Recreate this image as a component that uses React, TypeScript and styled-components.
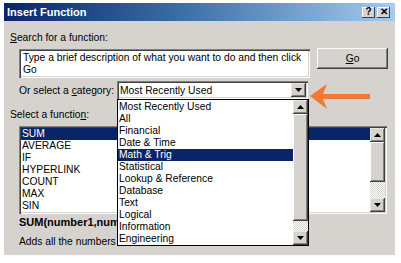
import styled, { createGlobalStyle } from "styled-components";

const GlobalStyle = createGlobalStyle`
    html, body {
        margin: 0;
        padding: 0;
        background: #ffffff;
    }
    body {
        font-family: "Liberation Sans", Arial, sans-serif;
        font-size: 10.3px;
        color: #000;
    }
`;

const Page = styled.div`
    padding: 3px 0 0 4px;
`;

const Dialog = styled.div`
    position: relative;
    width: 391px;
    height: 252px;
    background: #d6d3ce;
    box-sizing: border-box;
`;

const TitleBar = styled.div`
    height: 18px;
    display: flex;
    align-items: center;
    padding: 0 5px 0 3px;
    background: linear-gradient(to right, #0a246a 0%, #3a6ea5 45%, #a6caf0 100%);
`;

const Title = styled.div`
    flex: 1;
    color: #fff;
    font-weight: bold;
    font-size: 11px;
`;

const TitleButton = styled.div`
    width: 13px;
    height: 11px;
    margin-left: 2px;
    background: #d6d3ce;
    display: flex;
    align-items: center;
    justify-content: center;
    font-weight: bold;
    font-size: 10px;
    line-height: 1;
    box-shadow: inset -1px -1px #404040, inset 1px 1px #fff;
`;

const Content = styled.div`
    padding: 11px 0 0 6px;
    display: flex;
    flex-direction: column;
`;

const Label = styled.div<{ $top?: number }>`
    height: 12px;
    line-height: 12px;
    margin-top: ${(p) => p.$top ?? 0}px;
    white-space: nowrap;
`;

const Row = styled.div<{ $top: number }>`
    display: flex;
    align-items: flex-start;
    margin: ${(p) => p.$top}px 0 0 9px;
`;

const Sunken = styled.div`
    background: #fff;
    box-sizing: border-box;
    box-shadow: inset 1px 1px #808080, inset 2px 2px #404040, inset -1px -1px #fff, inset -2px -2px #d6d3ce;
`;

const SearchBox = styled(Sunken)`
    width: 291px;
    height: 29px;
    margin-top: 1px;
    padding: 3px 4px;
    line-height: 12px;
`;

const Button = styled.div`
    width: 71px;
    height: 21px;
    margin-left: 7px;
    display: flex;
    align-items: center;
    justify-content: center;
    box-sizing: border-box;
    box-shadow: inset -1px -1px #404040, inset 1px 1px #fff, inset -2px -2px #808080;
`;

const CategoryLabel = styled.div`
    width: 98px;
    height: 18px;
    padding-top: 4px;
    box-sizing: border-box;
    line-height: 12px;
`;

const Combo = styled(Sunken)`
    position: relative;
    width: 191px;
    height: 18px;
    display: flex;
    align-items: center;
    padding: 2px 2px 2px 3px;
`;

const ComboText = styled.div`
    flex: 1;
`;

const ArrowButton = styled.div<{ $w?: number; $h?: number }>`
    width: ${(p) => p.$w ?? 15}px;
    height: ${(p) => p.$h ?? 14}px;
    flex: none;
    background: #d6d3ce;
    display: flex;
    align-items: center;
    justify-content: center;
    box-sizing: border-box;
    box-shadow: inset -1px -1px #404040, inset 1px 1px #e8e6e2, inset -2px -2px #808080;
`;

const Popup = styled.div`
    position: absolute;
    top: 100%;
    left: 0;
    width: 192px;
    height: 147px;
    box-sizing: border-box;
    border: 1px solid #000;
    background: #fff;
    display: flex;
    z-index: 2;
`;

const Items = styled.div<{ $rowH: number; $padTop: number }>`
    flex: 1;
    padding-top: ${(p) => p.$padTop}px;
    line-height: ${(p) => p.$rowH}px;
    overflow: hidden;
`;

const Item = styled.div<{ $selected?: boolean }>`
    padding-left: 1px;
    white-space: nowrap;
    background: ${(p) => (p.$selected ? "#0a246a" : "transparent")};
    color: ${(p) => (p.$selected ? "#fff" : "#000")};
`;

const ScrollBar = styled.div`
    width: 15px;
    display: flex;
    flex-direction: column;
`;

const Thumb = styled.div<{ $h: number }>`
    height: ${(p) => p.$h}px;
    background: #d6d3ce;
    box-shadow: inset -1px -1px #404040, inset 1px 1px #fff, inset -2px -2px #808080;
`;

const Track = styled.div`
    flex: 1;
    background-image: repeating-conic-gradient(#ffffff 0 25%, #d6d3ce 0 50%);
    background-size: 2px 2px;
`;

const FunctionList = styled(Sunken)`
    width: 368px;
    height: 88px;
    padding: 2px;
    display: flex;
`;

/* the open category list covers the right part of these two lines */
const Signature = styled.div`
    width: 98px;
    overflow: hidden;
    margin: 2px 0 0 9px;
    font-weight: bold;
    font-size: 11px;
    line-height: 12px;
    white-space: nowrap;
`;

const Description = styled.div`
    width: 98px;
    overflow: hidden;
    margin: 8px 0 0 9px;
    line-height: 12px;
    white-space: nowrap;
`;

const Pointer = styled.svg`
    position: absolute;
    left: 306px;
    top: 79px;
`;

const U = styled.span`
    text-decoration: underline;
`;

function Tri({ up }: { up?: boolean }) {
    return (
        <svg width="7" height="4" viewBox="0 0 7 4">
            <polygon points={up ? "3.5,0 7,4 0,4" : "0,0 7,0 3.5,4"} fill="#000" />
        </svg>
    );
}

function VScroll({ thumb }: { thumb: number }) {
    return (
        <ScrollBar>
            <ArrowButton $w={15} $h={14}><Tri up /></ArrowButton>
            <Thumb $h={thumb} />
            <Track />
            <ArrowButton $w={15} $h={14}><Tri /></ArrowButton>
        </ScrollBar>
    );
}

const categories = [
    "Most Recently Used", "All", "Financial", "Date & Time", "Math & Trig", "Statistical",
    "Lookup & Reference", "Database", "Text", "Logical", "Information", "Engineering",
];
const functions = ["SUM", "AVERAGE", "IF", "HYPERLINK", "COUNT", "MAX", "SIN"];

export default function App() {
    return (
        <Page>
            <GlobalStyle />
            <Dialog>
                <TitleBar>
                    <Title>Insert Function</Title>
                    <TitleButton>?</TitleButton>
                    <TitleButton>✕</TitleButton>
                </TitleBar>
                <Content>
                    <Label><U>S</U>earch for a function:</Label>
                    <Row $top={4}>
                        <SearchBox>
                            Type a brief description of what you want to do and then click Go
                        </SearchBox>
                        <Button><U>G</U>o</Button>
                    </Row>
                    <Row $top={3}>
                        <CategoryLabel>Or select a <U>c</U>ategory:</CategoryLabel>
                        <Combo>
                            <ComboText>Most Recently Used</ComboText>
                            <ArrowButton $w={15} $h={14}><Tri /></ArrowButton>
                            <Popup>
                                <Items $rowH={12} $padTop={1}>
                                    {categories.map((c) => (
                                        <Item key={c} $selected={c === "Math & Trig"}>{c}</Item>
                                    ))}
                                </Items>
                                <VScroll thumb={107} />
                            </Popup>
                        </Combo>
                    </Row>
                    <Label $top={10}>Select a functio<U>n</U>:</Label>
                    <Row $top={5}>
                        <FunctionList>
                            <Items $rowH={12} $padTop={0}>
                                {functions.map((f) => (
                                    <Item key={f} $selected={f === "SUM"}>{f}</Item>
                                ))}
                            </Items>
                            <VScroll thumb={40} />
                        </FunctionList>
                    </Row>
                    <Signature>SUM(number1,number2,...)</Signature>
                    <Description>Adds all the numbers in a range of cells.</Description>
                </Content>
                <Pointer width="60" height="28" viewBox="0 0 60 28">
                    <polygon points="0,14 17,2 13,12 60,12 60,17 13,17 17,27" fill="#f07a35" />
                </Pointer>
            </Dialog>
        </Page>
    );
}
